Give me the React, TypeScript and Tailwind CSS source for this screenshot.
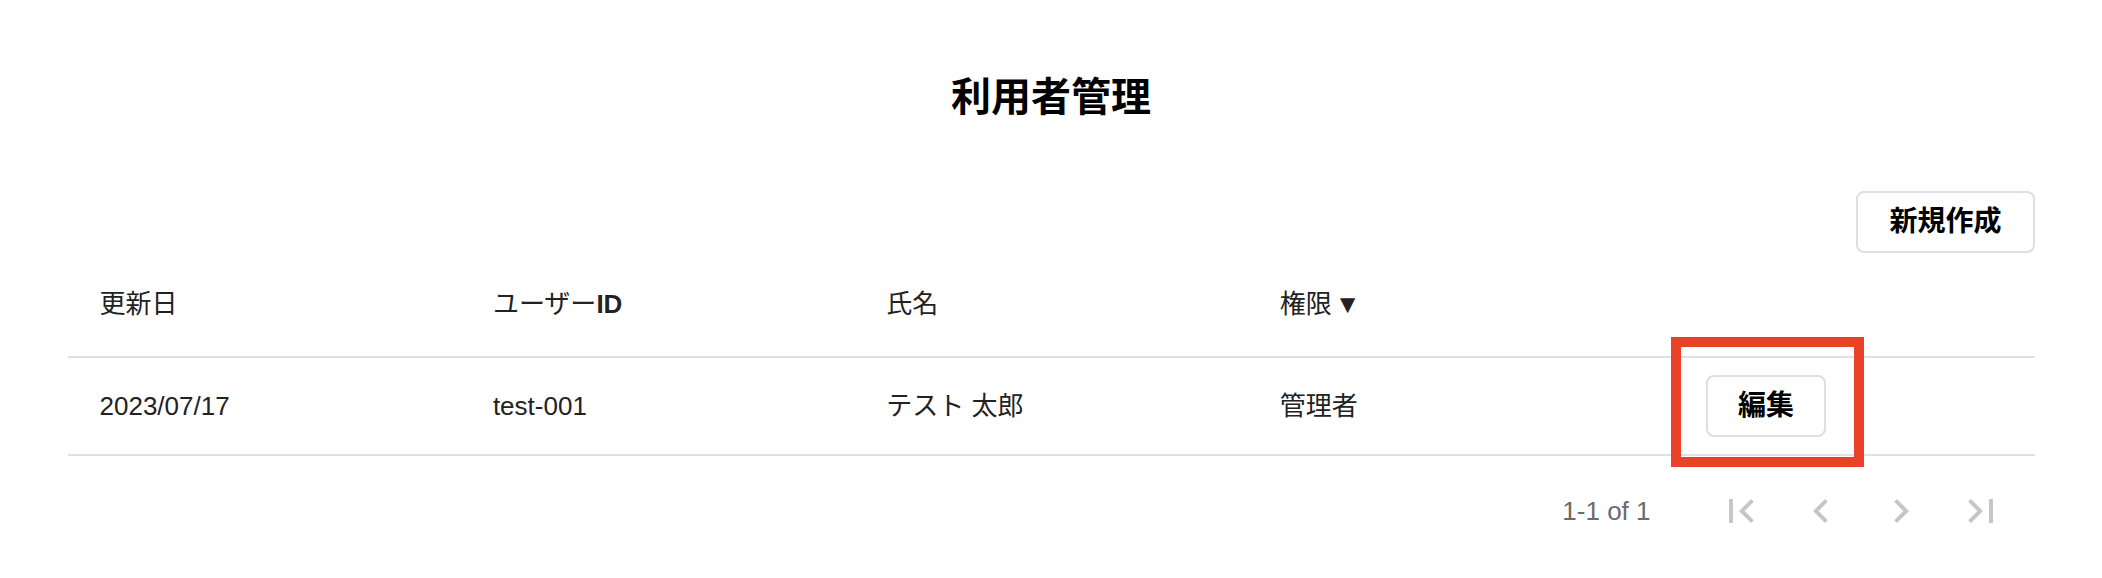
const font = { fontFamily: '"Liberation Sans", "Noto Sans CJK JP", sans-serif' }

type User = {
  updatedAt: string
  userId: string
  name: string
  role: string
}

const users: User[] = [{ updatedAt: '2023/07/17', userId: 'test-001', name: 'テスト 太郎', role: '管理者' }]

function FirstPageIcon() {
  return (
    <svg width="48" height="48" viewBox="0 0 24 24" fill="#c6c6c6">
      <path d="M18.41 16.59L13.82 12l4.59-4.59L17 6l-6 6 6 6zM6 6h2v12H6z" />
    </svg>
  )
}

function PrevIcon() {
  return (
    <svg width="48" height="48" viewBox="0 0 24 24" fill="#c6c6c6">
      <path d="M15.41 7.41L14 6l-6 6 6 6 1.41-1.41L10.83 12z" />
    </svg>
  )
}

function NextIcon() {
  return (
    <svg width="48" height="48" viewBox="0 0 24 24" fill="#c6c6c6">
      <path d="M10 6L8.59 7.41 13.17 12l-4.58 4.59L10 18l6-6z" />
    </svg>
  )
}

function LastPageIcon() {
  return (
    <svg width="48" height="48" viewBox="0 0 24 24" fill="#c6c6c6">
      <path d="M5.59 7.41L10.18 12l-4.59 4.59L7 18l6-6-6-6zM16 6h2v12h-2z" />
    </svg>
  )
}

export default function App() {
  return (
    <div className="min-h-[578px] w-full bg-white text-[#222]" style={font}>
      <div className="mx-auto w-[1967px] pt-[73px]">
        <h1 className="text-center text-[40px] font-bold leading-[48px] text-black">利用者管理</h1>

        <div className="mt-[70px] flex justify-end">
          <button
            type="button"
            className="h-[62px] rounded-[8px] border-2 border-[#dcdfdf] bg-white px-[31px] text-[28px] font-bold text-black"
          >
            新規作成
          </button>
        </div>

        <div className="relative">
          <div className="grid h-[105px] grid-cols-5 items-center border-b-2 border-[#e0e0e0] text-[26px]">
            <div className="px-[32px]">更新日</div>
            <div className="px-[32px]">
              ユーザー<span className="font-bold">ID</span>
            </div>
            <div className="px-[32px]">氏名</div>
            <div className="px-[32px]">
              権限<span className="ml-[3px]">▼</span>
            </div>
            <div />
          </div>

          {users.map((user) => (
            <div
              key={user.userId}
              className="grid h-[98px] grid-cols-5 items-center border-b-2 border-[#e0e0e0] text-[26px]"
            >
              <div className="px-[32px]">{user.updatedAt}</div>
              <div className="px-[32px]">{user.userId}</div>
              <div className="px-[32px]">{user.name}</div>
              <div className="px-[32px]">{user.role}</div>
              <div className="pl-[65px]">
                <button
                  type="button"
                  className="h-[62px] w-[120px] rounded-[8px] border-2 border-[#dcdfdf] bg-white text-[28px] font-bold text-black"
                >
                  編集
                </button>
              </div>
            </div>
          ))}

          {/* annotation box around the edit button */}
          <div className="pointer-events-none absolute left-[1603px] top-[84px] h-[130px] w-[193px] border-[10px] border-[#ea4129]" />
        </div>

        <div className="flex h-[110px] items-center justify-end pr-[14px]">
          <span className="text-[26px] text-[#6b6b6b]">1-1 of 1</span>
          <div className="ml-[50px] flex">
            <button type="button" className="flex h-[80px] w-[80px] items-center justify-center" disabled>
              <FirstPageIcon />
            </button>
            <button type="button" className="flex h-[80px] w-[80px] items-center justify-center" disabled>
              <PrevIcon />
            </button>
            <button type="button" className="flex h-[80px] w-[80px] items-center justify-center" disabled>
              <NextIcon />
            </button>
            <button type="button" className="flex h-[80px] w-[80px] items-center justify-center" disabled>
              <LastPageIcon />
            </button>
          </div>
        </div>
      </div>
    </div>
  )
}
